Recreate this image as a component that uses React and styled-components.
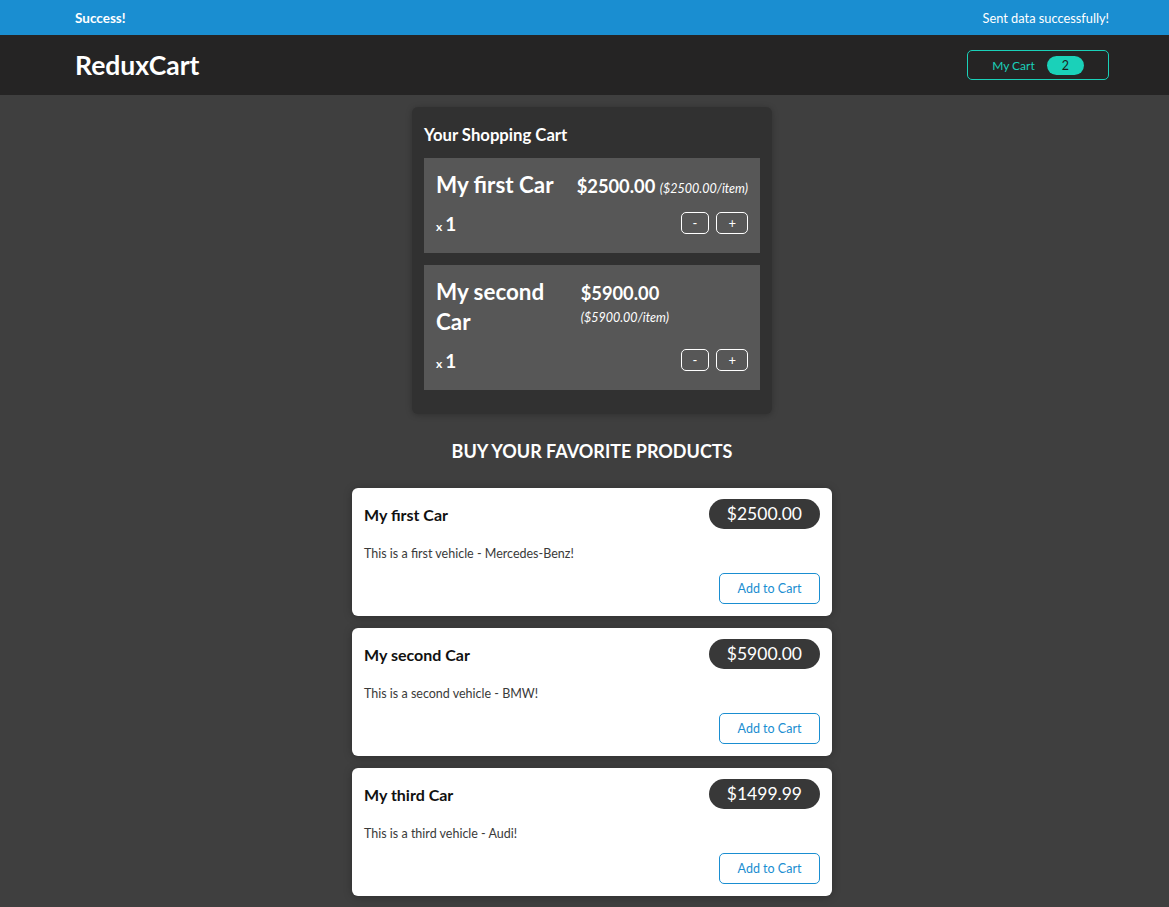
import React from "react";
import styled, { createGlobalStyle } from "styled-components";

const GlobalStyle = createGlobalStyle`
  * { box-sizing: border-box; }
  html { font-family: Lato, "Open Sans", sans-serif; }
  body { margin: 0; background-color: #3f3f3f; overflow-x: hidden; }
`;

const Page = styled.div`
  width: 1184px;
`;

const Notification = styled.section`
  height: 35px;
  padding: 0 75px;
  display: flex;
  justify-content: space-between;
  align-items: center;
  background-color: #1a8ed1;
  color: white;
`;

const NoteTitle = styled.h2`
  margin: 0;
  font-size: 13.5px;
  font-weight: 700;
`;

const NoteText = styled.p`
  margin: 0;
  font-size: 12.8px;
`;

const Header = styled.header`
  height: 60px;
  padding: 0 75px;
  display: flex;
  justify-content: space-between;
  align-items: center;
  background-color: #252424;
`;

const Logo = styled.h1`
  margin: 0;
  color: white;
  font-size: 26.5px;
  font-weight: 700;
`;

const CartButton = styled.button`
  height: 30px;
  background: transparent;
  border: 1px solid #1ad1b9;
  color: #1ad1b9;
  font: inherit;
  font-size: 12px;
  padding: 0 24px;
  border-radius: 5px;
  display: flex;
  align-items: center;
  cursor: pointer;
`;

const Badge = styled.span`
  background-color: #1ad1b9;
  border-radius: 30px;
  height: 19px;
  line-height: 19px;
  padding: 0 15px;
  margin-left: 12px;
  color: #1d1d1d;
  font-size: 12.5px;
`;

const Main = styled.main`
  width: 480px;
  margin: 12px auto;
`;

const Cart = styled.section`
  width: 360px;
  margin: 0 auto;
  padding: 12px;
  border-radius: 6px;
  background-color: #313131;
  color: white;
  box-shadow: 0 1px 6px rgba(0, 0, 0, 0.25);
`;

const CartTitle = styled.h2`
  font-size: 16.7px;
  line-height: 22px;
  margin: 5px 0 12px;
`;

const List = styled.ul`
  list-style: none;
  margin: 0;
  padding: 0;
`;

const CartItemBox = styled.li`
  margin: 12px 0;
  background-color: #575757;
  padding: 6px 12px 13px;
`;

const ItemHeader = styled.header`
  display: flex;
  justify-content: space-between;
  align-items: baseline;
`;

const ItemName = styled.h3`
  margin: 6px 0;
  font-size: 22.4px;
  line-height: 30px;
  font-weight: 700;
`;

const ItemPrice = styled.div`
  font-size: 18.3px;
  font-weight: 700;
`;

const UnitPrice = styled.span`
  font-weight: 400;
  font-size: 12.5px;
  font-style: italic;
`;

const Details = styled.div`
  display: flex;
  justify-content: space-between;
  align-items: center;
`;

const Quantity = styled.div`
  font-size: 12px;
  font-weight: 700;
`;

const QtyNum = styled.span`
  font-size: 19px;
  font-weight: 700;
`;

const Actions = styled.div`
  display: flex;
  justify-content: flex-end;
  gap: 7px;
  margin: 6px 0;
`;

const QtyButton = styled.button`
  height: 22px;
  background: transparent;
  border: 1px solid white;
  border-radius: 5px;
  padding: 0 11px;
  color: white;
  font: inherit;
  font-size: 13px;
  cursor: pointer;
`;

const Products = styled.section``;

const ProductsTitle = styled.h2`
  margin: 26px 0 26px;
  text-align: center;
  color: white;
  text-transform: uppercase;
  font-size: 18px;
  line-height: 22px;
  font-weight: 700;
`;

const ProductCard = styled.li`
  background-color: white;
  border-radius: 6px;
  padding: 11px 12px 12px;
  margin-bottom: 12px;
  box-shadow: 0 1px 8px rgba(0, 0, 0, 0.25);
`;

const ProductHeader = styled.header`
  display: flex;
  justify-content: space-between;
  align-items: center;
`;

const ProductName = styled.h3`
  margin: 0;
  font-size: 16px;
  font-weight: 700;
  color: #111;
`;

const Pill = styled.div`
  height: 30px;
  line-height: 30px;
  padding: 0 18px;
  border-radius: 30px;
  background-color: #383838;
  color: white;
  font-size: 17.5px;
`;

const Description = styled.p`
  margin: 16px 0 10px;
  font-size: 12.5px;
  line-height: 18px;
  color: #3a3a3a;
`;

const ProductActions = styled.div`
  display: flex;
  justify-content: flex-end;
`;

const AddButton = styled.button`
  width: 101px;
  height: 31px;
  padding: 0;
  background: transparent;
  border: 1px solid #1a8ed1;
  border-radius: 5px;
  color: #1a8ed1;
  font: inherit;
  font-size: 12.5px;
  cursor: pointer;
`;

const cartItems = [
  { id: 1, title: "My first Car", total: 2500, price: 2500, quantity: 1 },
  { id: 2, title: "My second Car", total: 5900, price: 5900, quantity: 1 },
];

const products = [
  { id: 1, title: "My first Car", price: 2500, description: "This is a first vehicle - Mercedes-Benz!" },
  { id: 2, title: "My second Car", price: 5900, description: "This is a second vehicle - BMW!" },
  { id: 3, title: "My third Car", price: 1499.99, description: "This is a third vehicle - Audi!" },
];

export default function App() {
  return (
    <Page>
      <GlobalStyle />
      <Notification>
        <NoteTitle>Success!</NoteTitle>
        <NoteText>Sent data successfully!</NoteText>
      </Notification>
      <Header>
        <Logo>ReduxCart</Logo>
        <CartButton>
          <span>My Cart</span>
          <Badge>2</Badge>
        </CartButton>
      </Header>
      <Main>
        <Cart>
          <CartTitle>Your Shopping Cart</CartTitle>
          <List>
            {cartItems.map((item) => (
              <CartItemBox key={item.id}>
                <ItemHeader>
                  <ItemName>{item.title}</ItemName>
                  <ItemPrice>
                    ${item.total.toFixed(2)}{" "}
                    <UnitPrice>(${item.price.toFixed(2)}/item)</UnitPrice>
                  </ItemPrice>
                </ItemHeader>
                <Details>
                  <Quantity>
                    x <QtyNum>{item.quantity}</QtyNum>
                  </Quantity>
                  <Actions>
                    <QtyButton>-</QtyButton>
                    <QtyButton>+</QtyButton>
                  </Actions>
                </Details>
              </CartItemBox>
            ))}
          </List>
        </Cart>
        <Products>
          <ProductsTitle>Buy your favorite products</ProductsTitle>
          <List>
            {products.map((p) => (
              <ProductCard key={p.id}>
                <ProductHeader>
                  <ProductName>{p.title}</ProductName>
                  <Pill>${p.price.toFixed(2)}</Pill>
                </ProductHeader>
                <Description>{p.description}</Description>
                <ProductActions>
                  <AddButton>Add to Cart</AddButton>
                </ProductActions>
              </ProductCard>
            ))}
          </List>
        </Products>
      </Main>
    </Page>
  );
}
